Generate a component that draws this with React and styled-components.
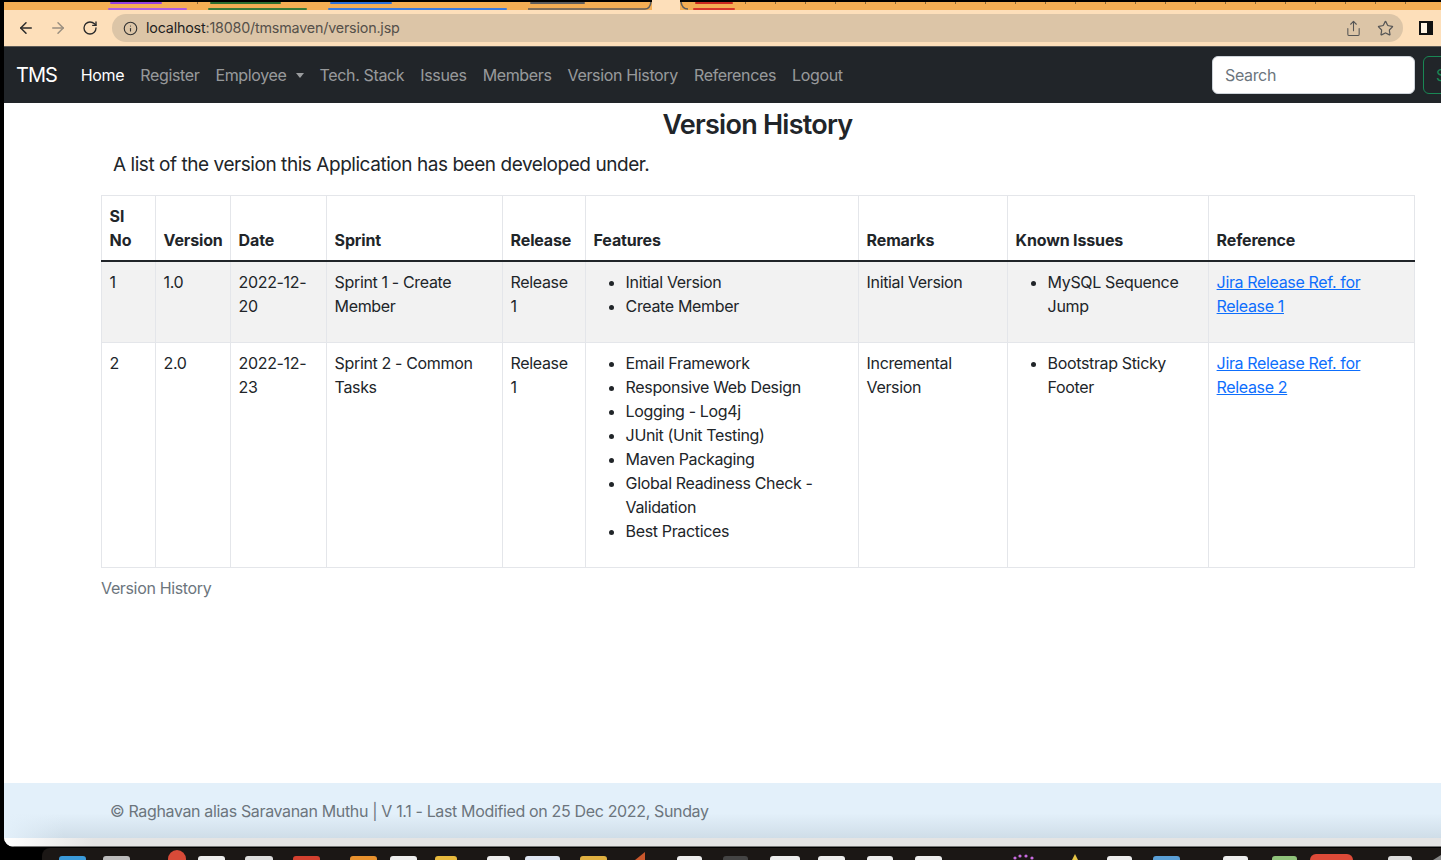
import React from "react";
import styled, { createGlobalStyle } from "styled-components";
import { ArrowLeft, ArrowRight, RotateCw, Info, Share, Star } from "lucide-react";

const Global = createGlobalStyle`
  html, body { margin: 0; padding: 0; background: #fff; }
  body { font-family: Inter, "Liberation Sans", sans-serif; font-size: 16px; line-height: 24px; color: #212529; letter-spacing: -0.35px; }
  * { box-sizing: border-box; }
`;

const Screen = styled.div`
  width: 1441px; height: 860px; overflow: hidden; background: #000;
  display: flex; flex-direction: column;
`;
const Win = styled.div`
  width: 1437px; height: 847px; margin-left: 4px; background: #fff;
  display: flex; flex-direction: column; border-bottom-left-radius: 10px; overflow: hidden;
  flex: none;
`;
const TabStrip = styled.svg`
  display: block; width: 1437px; height: 10px; flex: none;
`;
const Toolbar = styled.div`
  height: 37px; flex: none; background: #fddfba; border-bottom: 1px solid #5c5a56;
  display: flex; align-items: center; padding: 0 0 0 13px;
  color: #3c3c3c;
`;
const NavIcon = styled.span`
  display: flex; width: 18px; justify-content: center; margin-right: 14px;
  color: ${p => (p.$dim ? "#9a8f80" : "#2b2b2b")};
`;
const Omnibox = styled.div`
  width: 1291px; height: 28px; margin-left: -1px; border-radius: 14px; background: #dcc5a7;
  display: flex; align-items: center; padding: 0 9px 0 11px; color: #333;
  font-size: 14.3px; line-height: 28px; letter-spacing: -0.18px;
`;
const Host = styled.span` color: #1f1f1f; margin-left: 8px; `;
const Path = styled.span` color: #55504a; flex: 1; `;
const ToolIcon = styled.span`
  display: flex; margin-left: 15px; color: #555;
`;
const SidePanel = styled.span`
  width: 14px; height: 14px; margin-left: 16px; border: 2px solid #111; border-right-width: 6px; background: #fff3e2; flex: none;
`;
const Navbar = styled.nav`
  height: 56px; flex: none; background: #212529; display: flex; align-items: center; padding-left: 12px; overflow: hidden;
`;
const Brand = styled.span` color: #fff; font-size: 20px; margin-right: 16px; letter-spacing: -1px; `;
const NavLink = styled.span`
  color: ${p => (p.$active ? "#fff" : "rgba(255,255,255,.55)")}; padding: 0 8px; white-space: nowrap;
  font-size: 16px;
`;
const Caret = styled.i`
  display: inline-block; margin-left: 9px; vertical-align: 3px;
  border-top: 5px solid; border-left: 4.5px solid transparent; border-right: 4.5px solid transparent;
`;
const SearchForm = styled.div`
  margin-left: auto; display: flex; gap: 8px; flex: none; margin-right: -52px;
`;
const SearchBox = styled.div`
  width: 203px; height: 38px; background: #fff; border: 1px solid #ced4da; border-radius: 6px;
  padding: 6px 12px; color: #6c757d;
`;
const SearchBtn = styled.div`
  width: 70px; height: 38px; border: 1px solid #198754; border-radius: 6px; padding: 6px 12px; color: #198754;
`;
const Main = styled.main`
  flex: 1; min-height: 0; padding: 0 27px 0 97px;
`;
const Title = styled.h1`
  margin: 5px 0 8px; font-size: 27px; line-height: 34px; font-weight: 600; text-align: center; letter-spacing: -0.75px;
`;
const Lead = styled.p`
  margin: 0 0 15px 12px; font-size: 19px; line-height: 30px; font-weight: 400; letter-spacing: -0.45px;
`;
const Table = styled.table`
  width: 1313px; table-layout: fixed; border-collapse: collapse; color: #212529;
  border: 1px solid #e4e6ea;
`;
const Th = styled.th`
  text-align: left; vertical-align: bottom; font-weight: 700; padding: 8px 8px 8px 7.6px; border: 1px solid #e4e6ea;
  border-bottom: 2px solid #212529; letter-spacing: -0.15px;
`;
const Td = styled.td`
  vertical-align: top; padding: 8px 8px 8px 7.6px; border: 1px solid #e4e6ea;
  background: ${p => (p.$odd ? "#f2f2f2" : "#fff")};
`;
const List = styled.ul`
  margin: 0 0 16px; padding-left: 32px;
`;
const A = styled.a` color: #0d6efd; text-decoration: underline; `;
const Caption = styled.div`
  color: #6c757d; padding: 8px 0;
`;
const Footer = styled.footer`
  height: 55px; flex: none; padding: 16px 0 0 106px; color: #6c757d;
  background: linear-gradient(90deg, #e3f0fa 0, rgba(227,240,250,0) 60px),
    linear-gradient(#e3f0fa 0, #e3f0fa 55%, #cfdde8 100%);
`;
const Shadow = styled.div`
  height: 9px; flex: none; border-bottom: 1px solid #777;
  background: linear-gradient(90deg, #fff 0, #e4e4e4 90px);
`;
const Dock = styled.svg`
  display: block; width: 1441px; height: 13px; flex: none;
`;

const widths = [54, 75, 96, 176, 83, 273, 149, 201, 206];
const heads = ["Sl No", "Version", "Date", "Sprint", "Release", "Features", "Remarks", "Known Issues", "Reference"];
const rows = [
  ["1", "1.0", "2022-12-20", "Sprint 1 - Create Member", "Release 1",
    ["Initial Version", "Create Member"], "Initial Version", ["MySQL Sequence Jump"], "Jira Release Ref. for Release 1"],
  ["2", "2.0", "2022-12-23", "Sprint 2 - Common Tasks", "Release 1",
    ["Email Framework", "Responsive Web Design", "Logging - Log4j", "JUnit (Unit Testing)", "Maven Packaging", "Global Readiness Check - Validation", "Best Practices"],
    "Incremental Version", ["Bootstrap Sticky Footer"], "Jira Release Ref. for Release 2"],
];
const links = ["Register", "Tech. Stack", "Issues", "Members", "Version History", "References", "Logout"];
const ticks = Array.from({ length: 23 }, (_, i) => 741 + i * 30);
const dockIcons = [
  [59, 27, "#3a9ad9"], [103, 27, "#bbb"], [198, 27, "#eee"], [245, 28, "#ddd"], [293, 27, "#d3402f"],
  [350, 27, "#e8912d"], [390, 27, "#eee"], [435, 22, "#e7b93c"], [487, 23, "#eee"], [525, 35, "#dfe6f2"],
  [580, 27, "#e0b040"], [677, 25, "#eee"], [723, 25, "#444"], [770, 30, "#eee"], [818, 27, "#eee"],
  [867, 26, "#eee"], [915, 27, "#eee"], [1107, 25, "#eee"], [1153, 27, "#5a9fd6"], [1223, 25, "#eee"],
  [1272, 25, "#8fc27a"], [1388, 24, "#ddd"],
];

export default function App() {
  return (
    <Screen>
      <Global />
      <Win>
        <TabStrip viewBox="0 0 1437 10">
          <rect width="1437" height="10" fill="#f4ae54" />
          <rect width="1437" height="2" fill="#000" />
          {ticks.map(x => <rect key={x} x={x} y="2" width="1" height="2" fill="#8a6a3a" />)}
          <rect x="193" y="2" width="1" height="2" fill="#8a6a3a" />
          <rect x="106" y="2" width="52" height="2" rx="1" fill="#9440e0" />
          <rect x="104" y="8" width="79" height="2" rx="1" fill="#ae5ce2" />
          <rect x="206" y="2" width="71" height="2" rx="1" fill="#2b6e2f" />
          <rect x="204" y="8" width="99" height="2" rx="1" fill="#3a7d3a" />
          <rect x="326" y="2" width="62" height="2" rx="1" fill="#2a6fd8" />
          <rect x="324" y="8" width="179" height="2" rx="1" fill="#3a7be0" />
          <rect x="526" y="2" width="55" height="2" rx="1" fill="#5c5c5c" />
          <path d="M648 0h28v10h-28z" fill="#fddfba" />
          <path d="M524 9h117q5 0 6-7" stroke="#5c5c5c" strokeWidth="1.6" fill="none" />
          <path d="M677 2q1 7 7 7" stroke="#5c5c5c" strokeWidth="1.6" fill="none" />
          <rect x="691" y="2" width="38" height="2" rx="1" fill="#c9281f" />
          <rect x="689" y="8" width="42" height="2" rx="1" fill="#d9362b" />
        </TabStrip>
        <Toolbar>
          <NavIcon><ArrowLeft size={18} strokeWidth={2} /></NavIcon>
          <NavIcon $dim><ArrowRight size={18} strokeWidth={2} /></NavIcon>
          <NavIcon><RotateCw size={16} strokeWidth={2} /></NavIcon>
          <Omnibox>
            <Info size={15} strokeWidth={1.8} />
            <Host>localhost</Host><Path>:18080/tmsmaven/version.jsp</Path>
            <ToolIcon><Share size={17} strokeWidth={1.5} /></ToolIcon>
            <ToolIcon><Star size={17} strokeWidth={1.7} /></ToolIcon>
          </Omnibox>
          <SidePanel />
        </Toolbar>
        <Navbar>
          <Brand>TMS</Brand>
          <NavLink $active>Home</NavLink>
          <NavLink>{links[0]}</NavLink>
          <NavLink>Employee<Caret /></NavLink>
          {links.slice(1).map(l => <NavLink key={l}>{l}</NavLink>)}
          <SearchForm>
            <SearchBox>Search</SearchBox>
            <SearchBtn>Search</SearchBtn>
          </SearchForm>
        </Navbar>
        <Main>
          <Title>Version History</Title>
          <Lead>A list of the version this Application has been developed under.</Lead>
          <Table>
            <colgroup>{widths.map((w, i) => <col key={i} style={{ width: w }} />)}</colgroup>
            <thead><tr>{heads.map(h => <Th key={h}>{h}</Th>)}</tr></thead>
            <tbody>
              {rows.map((r, ri) => (
                <tr key={ri}>
                  {r.map((c, ci) => (
                    <Td key={ci} $odd={ri === 0}>
                      {Array.isArray(c) ? <List>{c.map(x => <li key={x}>{x}</li>)}</List>
                        : ci === 8 ? <A href="#">{c}</A> : c}
                    </Td>
                  ))}
                </tr>
              ))}
            </tbody>
          </Table>
          <Caption>Version History</Caption>
        </Main>
        <Footer>© Raghavan alias Saravanan Muthu | V 1.1 - Last Modified on 25 Dec 2022, Sunday</Footer>
        <Shadow />
      </Win>
      <Dock viewBox="0 0 1441 13">
        <rect x="42" y="1" width="1420" height="20" rx="8" fill="#1b1715" />
        {dockIcons.map(([x, w, c]) => <rect key={x} x={x} y="9" width={w} height="8" rx="3" fill={c} />)}
        <circle cx="177" cy="12" r="9" fill="#d84a38" />
        <path d="M635 13l10-8v8z" fill="#c9572c" />
        <rect x="1310" y="7" width="43" height="12" rx="6" fill="#dd4a38" />
        <circle cx="1015" cy="11" r="1.6" fill="#c86be0" /><circle cx="1020" cy="9" r="1.6" fill="#c86be0" /><circle cx="1026" cy="9" r="1.6" fill="#c86be0" /><circle cx="1032" cy="11" r="1.6" fill="#c86be0" />
        <path d="M1072 13l3-6 3 6z" fill="#e7c545" />
        <path d="M1433 13l8-5v5z" fill="#888" />
      </Dock>
    </Screen>
  );
}
